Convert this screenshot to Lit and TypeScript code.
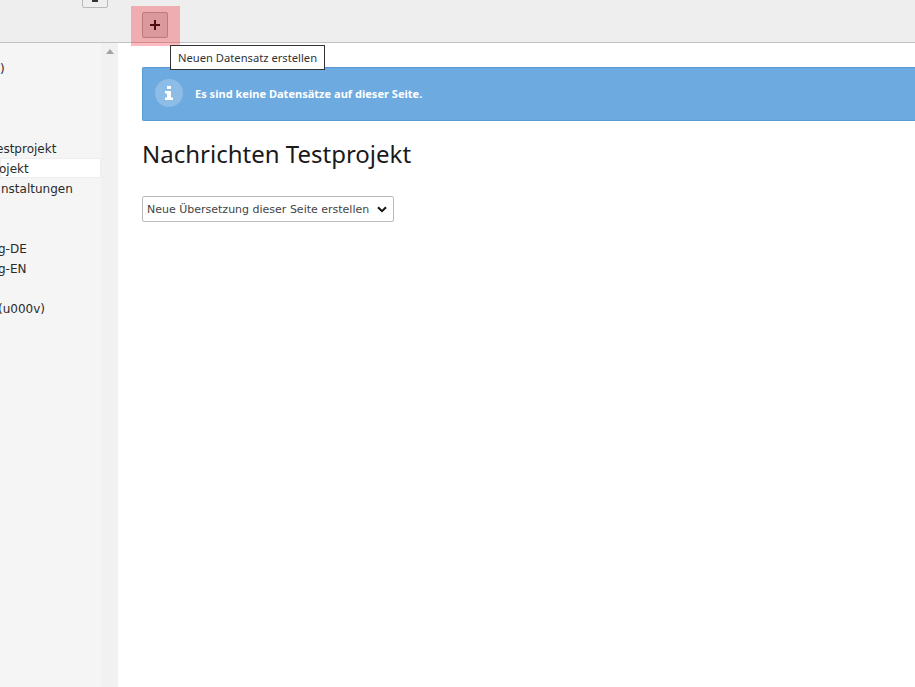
import { LitElement, html, css } from "lit";
import { customElement } from "lit/decorators.js";

@customElement("app-root")
export class AppRoot extends LitElement {
  static styles = css`
    :host { display: block; width: 915px; height: 687px; position: relative; overflow: hidden; background: #fff;
      font-family: "DejaVu Sans", sans-serif; font-size: 12px; color: #212121; }
    .topbar { height: 42px; display: flex; background: #eeeeee; border-bottom: 1px solid #c3c3c3; box-sizing: content-box; }
    .left-top { width: 142px; flex: none; position: relative; }
    .small-btn { position: absolute; left: 82px; top: -18px; width: 26px; height: 26px; box-sizing: border-box;
      background: #eeeeee; border: 1px solid #b9b9b9; border-radius: 2px; display: flex; justify-content: center; align-items: flex-end; padding-bottom: 5px; }
    .small-btn i { display: block; width: 6px; height: 2px; background: #333; }
    .new-btn { width: 26px; height: 26px; margin-top: 12px; box-sizing: border-box; background: #d2d2d2; border: 1px solid #a8a8a8; border-radius: 2px;
      display: flex; align-items: center; justify-content: center; color: #000; }
    .highlight { position: absolute; left: 131px; top: 6px; width: 49px; height: 40px; background: rgba(249, 0, 16, 0.27); }
    .tooltip { position: absolute; left: 170px; top: 45px; width: 155px; height: 25px; box-sizing: border-box; background: #fff; border: 1px solid #333;
      font-size: 11.2px; line-height: 23px; padding-left: 7px; color: #333; white-space: nowrap; font-family: "Noto Sans", sans-serif; }
    .body { display: flex; height: 644px; }
    .tree { width: 101px; background: #f5f5f5; flex: none; padding-top: 15px; box-sizing: border-box; }
    .row { height: 20px; line-height: 22px; white-space: nowrap; overflow: hidden; font-size: 12px; color: #2a2a2a; }
    .row.sel { background: #fff; box-shadow: inset 0 0 0 1px #eeeeee; }
    .scroll { width: 17px; flex: none; background: #f1f1f1; display: flex; justify-content: center; padding-top: 6px; box-sizing: border-box; }
    .arrow { width: 0; height: 0; border-left: 4px solid transparent; border-right: 4px solid transparent; border-bottom: 5px solid #a3a3a3; }
    .main { flex: 1; min-width: 0; padding: 24px 0 0 24px; box-sizing: border-box; }
    .alert { height: 54px; box-sizing: border-box; background: #6daae0; border: 1px solid #5b9bd5; border-right: 0; border-radius: 2px 0 0 2px;
      display: flex; align-items: center; padding-left: 12px; gap: 12px; color: #fff; font-weight: 700; font-size: 11.06px; font-family: "Noto Sans", sans-serif; padding-bottom: 2px; }
    .badge { width: 28px; height: 28px; border-radius: 50%; background: rgba(255,255,255,0.22); display: flex; align-items: center; justify-content: center; flex: none; }
    h1 { margin: 17px 0 0; font-size: 24px; line-height: 32px; font-weight: 400; color: #1a1a1a; font-family: "Noto Sans", sans-serif; }
    .select { margin-top: 26px; width: 252px; height: 26px; box-sizing: border-box; background: #fff; border: 1px solid #bbbbbb; border-radius: 2px;
      display: flex; align-items: center; justify-content: space-between; padding: 0 6px 0 4px; font-size: 11px; color: #444; white-space: nowrap; }
  `;

  render() {
    const rows: { t: string; shift?: number; sel?: boolean }[] = [
      { t: ")" }, { t: "" }, { t: "" }, { t: "" },
      { t: "estprojekt", shift: -4 }, { t: "ojekt", shift: -1, sel: true }, { t: "nstaltungen", shift: 1 },
      { t: "" }, { t: "" }, { t: "g-DE", shift: -2 }, { t: "g-EN", shift: -2 }, { t: "" }, { t: "(u000v)", shift: -2 },
    ];
    return html`
      <div class="topbar">
        <div class="left-top"><div class="small-btn"><i></i></div></div>
        <div class="new-btn">
          <svg width="10" height="10" viewBox="0 0 10 10"><path d="M4 0h2v4h4v2H6v4H4V6H0V4h4z" fill="#111"/></svg>
        </div>
      </div>
      <div class="body">
        <div class="tree">
          ${rows.map((r) => html`<div class="row ${r.sel ? "sel" : ""}" style="text-indent:${r.shift ?? 0}px">${r.t}</div>`)}
        </div>
        <div class="scroll"><div class="arrow"></div></div>
        <div class="main">
          <div class="alert">
            <div class="badge">
              <svg width="8" height="14" viewBox="0 0 8 14"><path d="M2 0h4v3H2zM0 5h6v6.500h2V14H0v-2.500h2V7.500H0z" fill="#fff"/></svg>
            </div>
            <span>Es sind keine Datensätze auf dieser Seite.</span>
          </div>
          <h1>Nachrichten Testprojekt</h1>
          <div class="select">
            <span>Neue Übersetzung dieser Seite erstellen</span>
            <svg width="10" height="7" viewBox="0 0 10 7"><path d="M1 1.200l4 4 4-4" fill="none" stroke="#111" stroke-width="2"/></svg>
          </div>
        </div>
      </div>
      <div class="highlight"></div>
      <div class="tooltip">Neuen Datensatz erstellen</div>
    `;
  }
}
